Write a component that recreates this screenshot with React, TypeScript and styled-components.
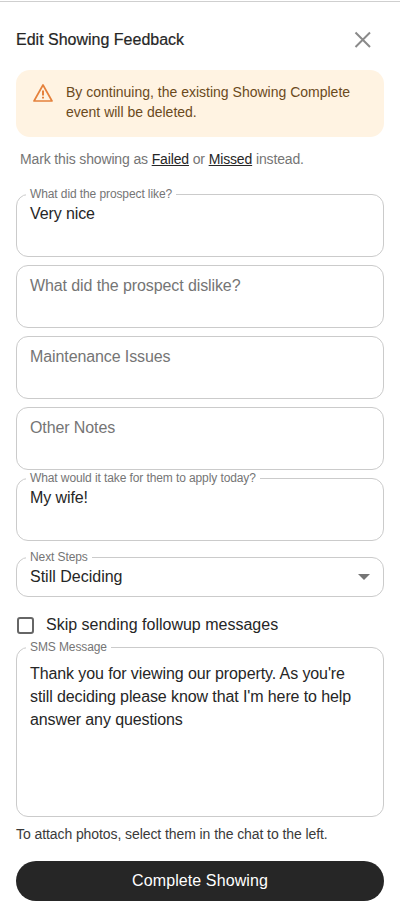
import styled, { createGlobalStyle } from "styled-components";

const GlobalStyle = createGlobalStyle`
    html, body {
        margin: 0;
        background: #fff;
    }
    body {
        font-family: "Liberation Sans", Arial, sans-serif;
        color: #262626;
    }
`;

const Page = styled.div`
    width: 400px;
    height: 917px;
    margin-top: 1px;
    box-sizing: border-box;
    border-top: 1px solid #cfcfcf;
    padding: 0 16px;
    overflow: hidden;
    display: flex;
    flex-direction: column;
`;
const Header = styled.div`
    height: 68px;
    display: flex;
    align-items: center;
    justify-content: space-between;
    padding-top: 8px;
    box-sizing: border-box;
`;
const Title = styled.h1`
    margin: 0;
    font-size: 16px;
    line-height: 18px;
    font-weight: 400;
    color: #262626;
    -webkit-text-stroke: 0.2px #262626;
`;
const CloseButton = styled.button`
    border: 0;
    background: none;
    padding: 0;
    margin: 0 12px 1px 0;
    width: 18px;
    height: 18px;
    display: flex;
    color: #8a8a8a;
`;
const Alert = styled.div`
    height: 67px;
    box-sizing: border-box;
    background: #fff3e2;
    border-radius: 14px;
    padding: 12px 16px 0 17px;
    display: flex;
    gap: 13px;
`;
const AlertIcon = styled.svg`
    flex: none;
    margin-top: 1px;
`;
const AlertText = styled.p`
    margin: 0;
    font-size: 14px;
    line-height: 20px;
    color: #6b4a1c;
`;
const Hint = styled.p`
    margin: 0;
    padding: 14px 0 0 4px;
    height: 57px;
    box-sizing: border-box;
    font-size: 14px;
    line-height: 17px;
    letter-spacing: -0.14px;
    color: #757575;
`;
const HintLink = styled.a`
    color: #262626;
    text-decoration: underline;
`;
const Fields = styled.div`
    display: flex;
    flex-direction: column;
    gap: 8px;
`;
const Field = styled.div`
    position: relative;
`;
const FloatingLabel = styled.label<{ $top?: number }>`
    position: absolute;
    left: 10px;
    top: ${props => props.$top ?? -7}px;
    padding: 0 4px;
    background: #fff;
    font-size: 12px;
    line-height: 14px;
    letter-spacing: -0.1px;
    color: #757575;
`;
const Input = styled.textarea<{ $height: number; $paddingTop: number }>`
    display: block;
    width: 100%;
    height: ${props => props.$height}px;
    box-sizing: border-box;
    border: 1px solid #cbcbcb;
    border-radius: 12px;
    padding: ${props => props.$paddingTop}px 13px 6px;
    margin: 0;
    resize: none;
    outline: none;
    font-family: inherit;
    font-size: 16px;
    line-height: 23px;
    letter-spacing: -0.1px;
    color: #262626;
    background: #fff;
    &::placeholder {
        color: #757575;
        opacity: 1;
    }
`;
const SelectBox = styled.div`
    margin-top: 16px;
    height: 40px;
    box-sizing: border-box;
    border: 1px solid #cbcbcb;
    border-radius: 12px;
    padding: 0 13px;
    display: flex;
    align-items: center;
    justify-content: space-between;
    font-size: 16px;
    color: #262626;
`;
const Caret = styled.span`
    width: 0;
    height: 0;
    border-left: 6px solid transparent;
    border-right: 6px solid transparent;
    border-top: 6px solid #757575;
`;
const CheckRow = styled.label`
    height: 50px;
    display: flex;
    align-items: center;
    gap: 12px;
    padding: 6px 0 0 1px;
    box-sizing: border-box;
    font-size: 16px;
    color: #262626;
`;
const CheckBox = styled.span`
    width: 17px;
    height: 17px;
    box-sizing: border-box;
    border: 2px solid #666;
    border-radius: 3px;
`;
const AttachNote = styled.p`
    margin: 0;
    padding-top: 9px;
    height: 44px;
    box-sizing: border-box;
    font-size: 14px;
    line-height: 16px;
    letter-spacing: -0.08px;
    color: #3a3a3a;
`;
const SubmitButton = styled.button`
    height: 40px;
    border: 0;
    border-radius: 20px;
    background: #262626;
    color: #fff;
    font-family: inherit;
    font-size: 16px;
    letter-spacing: 0.1px;
`;

export default function App() {
    return <Page>
        <GlobalStyle />
        <Header>
            <Title>Edit Showing Feedback</Title>
            <CloseButton aria-label="Close">
                <svg width="18" height="18" viewBox="0 0 18 18" fill="none" stroke="currentColor" strokeWidth="2">
                    <path d="M1.5 1.5 16 16M16 1.5 1.5 16" />
                </svg>
            </CloseButton>
        </Header>
        <Alert>
            <AlertIcon width="20" height="20" viewBox="0 0 20 20" fill="none" stroke="#e5813c" strokeWidth="1.7" strokeLinejoin="round">
                <path d="M10 2 19 18H1Z" />
                <path d="M10 7.5v5M10 13.8v1.8" strokeWidth="2" />
            </AlertIcon>
            <AlertText>By continuing, the existing Showing Complete event will be deleted.</AlertText>
        </Alert>
        <Hint>Mark this showing as <HintLink>Failed</HintLink> or <HintLink>Missed</HintLink> instead.</Hint>
        <Fields>
            <Field>
                <FloatingLabel>What did the prospect like?</FloatingLabel>
                <Input $height={63} $paddingTop={7} defaultValue="Very nice" />
            </Field>
            <Field>
                <Input $height={63} $paddingTop={8} placeholder="What did the prospect dislike?" />
            </Field>
            <Field>
                <Input $height={63} $paddingTop={8} placeholder="Maintenance Issues" />
            </Field>
            <Field>
                <Input $height={63} $paddingTop={8} placeholder="Other Notes" />
            </Field>
            <Field>
                <FloatingLabel>What would it take for them to apply today?</FloatingLabel>
                <Input $height={63} $paddingTop={7} defaultValue="My wife!" />
            </Field>
        </Fields>
        <Field>
            <FloatingLabel $top={9}>Next Steps</FloatingLabel>
            <SelectBox>Still Deciding<Caret /></SelectBox>
        </Field>
        <CheckRow><CheckBox />Skip sending followup messages</CheckRow>
        <Field>
            <FloatingLabel>SMS Message</FloatingLabel>
            <Input $height={170} $paddingTop={14} defaultValue="Thank you for viewing our property. As you're still deciding please know that I'm here to help answer any questions" />
        </Field>
        <AttachNote>To attach photos, select them in the chat to the left.</AttachNote>
        <SubmitButton>Complete Showing</SubmitButton>
    </Page>;
}
